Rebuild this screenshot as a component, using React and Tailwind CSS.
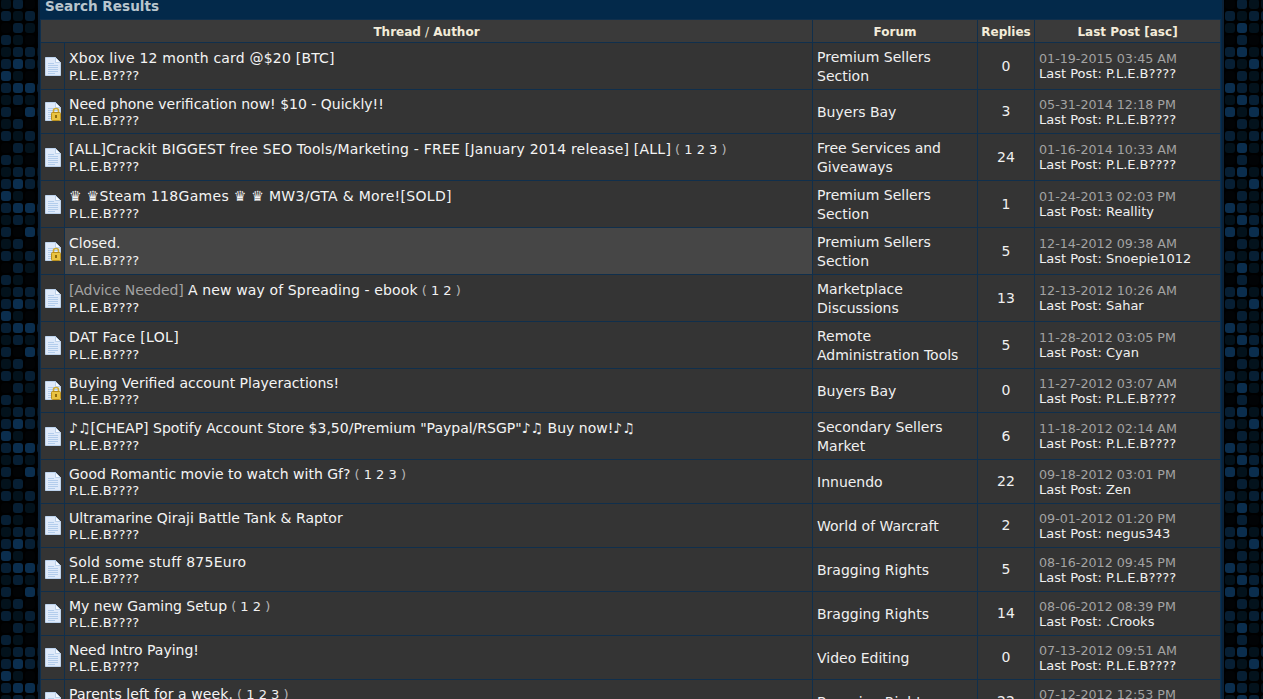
import React from "react";

const FONT = { fontFamily: '"DejaVu Sans", Verdana, sans-serif' };

const AUTHOR = "P.L.E.B????";

const threads = [
  { title: "Xbox live 12 month card @$20 [BTC]", track: "tracking-[0.2px]", forum: ["Premium Sellers", "Section"], replies: 0, date: "01-19-2015 03:45 AM", last: AUTHOR },
  { title: "Need phone verification now! $10 - Quickly!!", locked: true, forum: ["Buyers Bay"], replies: 3, date: "05-31-2014 12:18 PM", last: AUTHOR },
  { title: "[ALL]Crackit BIGGEST free SEO Tools/Marketing - FREE [January 2014 release] [ALL]", track: "tracking-[0.22px]", pages: "1 2 3", forum: ["Free Services and", "Giveaways"], replies: 24, date: "01-16-2014 10:33 AM", last: AUTHOR },
  { title: "♛ ♛Steam 118Games ♛ ♛ MW3/GTA & More![SOLD]", track: "tracking-[0.3px]", forum: ["Premium Sellers", "Section"], replies: 1, date: "01-24-2013 02:03 PM", last: "Reallity" },
  { title: "Closed.", locked: true, hover: true, forum: ["Premium Sellers", "Section"], replies: 5, date: "12-14-2012 09:38 AM", last: "Snoepie1012" },
  { prefix: "[Advice Needed]", title: "A new way of Spreading - ebook", track: "tracking-[0.13px]", pages: "1 2", forum: ["Marketplace", "Discussions"], replies: 13, date: "12-13-2012 10:26 AM", last: "Sahar" },
  { title: "DAT Face [LOL]", track: "tracking-[0.35px]", forum: ["Remote", "Administration Tools"], replies: 5, date: "11-28-2012 03:05 PM", last: "Cyan" },
  { title: "Buying Verified account Playeractions!", forum: ["Buyers Bay"], locked: true, replies: 0, date: "11-27-2012 03:07 AM", last: AUTHOR },
  { title: '♪♫[CHEAP] Spotify Account Store $3,50/Premium "Paypal/RSGP"♪♫ Buy now!♪♫', forum: ["Secondary Sellers", "Market"], replies: 6, date: "11-18-2012 02:14 AM", last: AUTHOR },
  { title: "Good Romantic movie to watch with Gf?", pages: "1 2 3", forum: ["Innuendo"], replies: 22, date: "09-18-2012 03:01 PM", last: "Zen" },
  { title: "Ultramarine Qiraji Battle Tank & Raptor", forum: ["World of Warcraft"], replies: 2, date: "09-01-2012 01:20 PM", last: "negus343" },
  { title: "Sold some stuff 875Euro", track: "tracking-[0.25px]", forum: ["Bragging Rights"], replies: 5, date: "08-16-2012 09:45 PM", last: AUTHOR },
  { title: "My new Gaming Setup", pages: "1 2", forum: ["Bragging Rights"], replies: 14, date: "08-06-2012 08:39 PM", last: ".Crooks" },
  { title: "Need Intro Paying!", forum: ["Video Editing"], replies: 0, date: "07-13-2012 09:51 AM", last: AUTHOR },
  { title: "Parents left for a week.", track: "tracking-[0.1px]", pages: "1 2 3", forum: ["Bragging Rights"], replies: 22, date: "07-12-2012 12:53 PM", last: AUTHOR },
];

// 10 row repeat of the page background, one digit per tile
const LEFT_TILES = ["1200", "2120", "0210", "2100", "1221", "2321", "3100", "2332", "1210", "2031"];
const RIGHT_TILES = ["0211", "2122", "1311", "0201", "2312", "2131", "0211", "3211", "1321", "3131"];

const TILE_COLORS = {
  0: "bg-[#010305]",
  1: "bg-[#03121c]",
  2: "bg-[#071f34]",
  3: "bg-[#0b2e4e]",
};

const TileStrip = ({ pattern, className }) => {
  const rows = Array.from({ length: 60 }, (_, i) => pattern[i % 10]);
  return (
    <div className={`h-full shrink-0 overflow-hidden bg-black pl-px ${className}`}>
      <div className="-mt-px grid grid-cols-[repeat(4,10px)] gap-[2px]">
        {rows.map((row, r) =>
          row.split("").map((level, c) => (
            <div key={`${r}-${c}`} className={`h-[10px] w-[10px] rounded-[3px] ${TILE_COLORS[level]}`} />
          ))
        )}
      </div>
    </div>
  );
};

const ThreadIcon = ({ locked }) => (
  <svg width="16" height="19" viewBox="0 0 16 19" className="mx-auto block">
    <path d="M0.5 0.5H10.5L15.5 5.5V18.5H0.5Z" fill="#dfeafa" stroke="#bcd2ec" />
    <path d="M10.5 0.5V5.5H15.5Z" fill="#f7fafe" stroke="#b0c8e4" strokeWidth="0.8" />
    <path d="M3 6.5H9M3 8.5H13M3 10.5H13M3 12.5H13M3 14.5H13M3 16.5H10" stroke="#b3cdec" strokeWidth="1" />
    {locked && (
      <g>
        <path d="M8.5 11V8.5C8.5 5.8 13.5 5.8 13.5 8.5V11" fill="none" stroke="#d0aa30" strokeWidth="1.6" />
        <rect x="6.5" y="10.5" width="9" height="8" rx="1" fill="#e9c341" stroke="#b88f1c" />
        <rect x="10" y="13" width="2" height="3" fill="#8f6c10" />
      </g>
    )}
  </svg>
);

const ThreadRow = ({ thread }) => (
  <tr>
    <td className="bg-[#343434] p-0 align-middle">
      <ThreadIcon locked={thread.locked} />
    </td>
    <td className={`px-1 py-1 align-middle ${thread.hover ? "bg-[#464646]" : "bg-[#343434]"}`}>
      <div className={`h-[19px] whitespace-nowrap text-[14px] leading-[19px] text-[#f4f4f4] ${thread.forum.length === 1 ? "pt-px" : ""}`}>
        {thread.prefix && <span className="tracking-[-0.1px] text-[#a3a3a3]">{thread.prefix} </span>}
        <span className={thread.track}>{thread.title}</span>
        {thread.pages && (
          <span className="ml-1 text-[13px] leading-none text-[#b5b5b5]">
            ( <span className="text-[#f0f0f0]">{thread.pages}</span> )
          </span>
        )}
      </div>
      <div className="text-[13px] leading-[16px] text-[#f4f4f4]">{AUTHOR}</div>
    </td>
    <td className="bg-[#343434] px-1 pb-[3px] pt-[5px] align-middle text-[14px] leading-[19px] text-[#f0f0f0]">
      {thread.forum.map((line) => (
        <div key={line} className="whitespace-nowrap">{line}</div>
      ))}
    </td>
    <td className="bg-[#343434] p-0 text-center align-middle text-[14px] text-[#f0f0f0]">{thread.replies}</td>
    <td className="bg-[#343434] px-1 py-1 align-middle leading-[15px]">
      <div className="whitespace-nowrap text-[12.7px] text-[#a3a3a3]">{thread.date}</div>
      <div className="whitespace-nowrap text-[13px] text-[#f0f0f0]">Last Post: {thread.last}</div>
    </td>
  </tr>
);

const App = () => {
  return (
    <div className="flex h-[699px] w-full overflow-hidden bg-black" style={FONT}>
      <TileStrip pattern={LEFT_TILES} className="w-[38px]" />

      <main className="h-full w-[1186px] shrink-0 overflow-hidden border-x-2 border-[#0c2238] bg-[#03294a]">
        <h2 className="flex h-[19px] items-start pl-[5px] text-[13.6px] font-bold leading-[13px] text-[#b9c5cd]">
          Search Results
        </h2>
        <table className="w-[1181px] table-fixed border-separate border-spacing-px bg-[#102f4c]">
          <colgroup>
            <col className="w-[23px]" />
            <col className="w-[747px]" />
            <col className="w-[164px]" />
            <col className="w-[56px]" />
            <col className="w-[185px]" />
          </colgroup>
          <thead>
            <tr className="h-[22px] text-center text-[12px] font-bold leading-none text-[#f3ecd9]">
              <th colSpan={2} className="bg-[#3a3a3a] p-0 pt-[2px] font-bold">
                Thread <span className="font-normal">/</span> Author
              </th>
              <th className="bg-[#3a3a3a] p-0 pt-[2px] font-bold">Forum</th>
              <th className="bg-[#3a3a3a] p-0 pt-[2px] font-bold">Replies</th>
              <th className="bg-[#3a3a3a] p-0 pt-[2px] font-bold">Last Post [asc]</th>
            </tr>
          </thead>
          <tbody>
            {threads.map((thread) => (
              <ThreadRow key={thread.date} thread={thread} />
            ))}
          </tbody>
        </table>
      </main>

      <TileStrip pattern={RIGHT_TILES} className="flex-1" />
    </div>
  );
};

export default App;
